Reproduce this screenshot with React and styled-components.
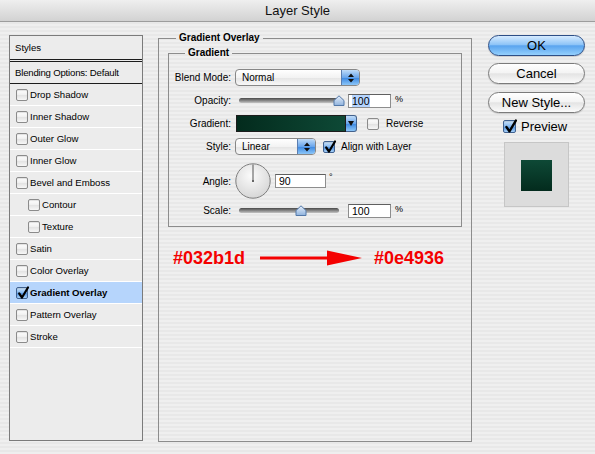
import React from 'react';
import styled, { createGlobalStyle, css } from 'styled-components';

const Global = createGlobalStyle`
  html, body { margin: 0; padding: 0; }
  body { font-family: "Liberation Sans", Arial, sans-serif; color: #000; }
`;

const stripes = css`
  background-color: #ececec;
  background-image: repeating-linear-gradient(
    to bottom,
    #efefef 0px, #efefef 2px,
    #e8e8e8 2px, #e8e8e8 4px
  );
`;

const Window = styled.div`
  width: 595px;
  height: 454px;
  overflow: hidden;
  display: flex;
  flex-direction: column;
  ${stripes}
`;

const TitleBar = styled.div`
  height: 22px;
  flex: none;
  box-sizing: border-box;
  display: flex;
  align-items: center;
  justify-content: center;
  background: linear-gradient(#efefef, #d2d2d2);
  border-bottom: 1px solid #9d9d9d;
  font-size: 13px;
  color: #111;
  padding-bottom: 1px;
`;

const Body = styled.div`
  display: flex;
  align-items: flex-start;
  padding: 13px 0 0 9px;
`;

/* ---------- left style list ---------- */
const StyleList = styled.div`
  width: 134px;
  height: 406px;
  box-sizing: border-box;
  border: 1px solid #7b7b7b;
  background: #ececec;
  display: flex;
  flex-direction: column;
  flex: none;
  font-size: 9.6px;
`;

const ListHeader = styled.div`
  height: 23px;
  display: flex;
  align-items: center;
  padding-left: 5px;
  border-bottom: 3px double #1c1c1c;
`;

const BlendRow = styled.div`
  height: 21px;
  display: flex;
  align-items: center;
  padding-left: 5px;
  border-bottom: 1px solid #1c1c1c;
  letter-spacing: -0.2px;
`;

const ListItem = styled.div`
  height: 21px;
  display: flex;
  align-items: center;
  gap: 2px;
  padding-left: ${p => 6 + (p.$indent ? 12 : 0)}px;
  border-bottom: 1px solid #ffffff;
  background: ${p => (p.$selected ? '#b6d5fc' : 'transparent')};
  font-weight: ${p => (p.$selected ? 700 : 400)};
`;

/* ---------- checkbox ---------- */
const Box = styled.span`
  width: ${p => p.$size}px;
  height: ${p => p.$size}px;
  box-sizing: border-box;
  flex: none;
  border-radius: 2px;
  border: 1px solid ${p => (p.$checked ? '#40618f' : '#8b8b8b')};
  background: ${p =>
    p.$checked
      ? 'linear-gradient(#cfe5fb, #7fb5ef 50%, #4f92e3 51%, #a6d0f8)'
      : 'linear-gradient(#ffffff, #efefef 50%, #e2e2e2 51%, #f7f7f7)'};
  position: relative;
  box-shadow: inset 0 1px 1px rgba(0, 0, 0, 0.12);
`;

const CheckMark = styled.svg`
  position: absolute;
  left: 0px;
  top: -2px;
  overflow: visible;
`;

function Checkbox({ checked, size = 12 }) {
  return (
    <Box $checked={checked} $size={size}>
      {checked && (
        <CheckMark width={size} height={size + 2} viewBox="0 0 12 14">
          <path d="M2.2 7.5 L5 11.5 L11 1.5" fill="none" stroke="#000" strokeWidth="2.2" strokeLinecap="round" strokeLinejoin="round" />
        </CheckMark>
      )}
    </Box>
  );
}

/* ---------- main group ---------- */
const Group = styled.fieldset`
  margin: -3px 0 0 15px;
  width: 314px;
  height: 410px;
  box-sizing: border-box;
  border: 1px solid #8c8c8c;
  padding: 3px 9px 0 9px;
  min-inline-size: 0;
  flex: none;
`;

const Legend = styled.legend`
  font-size: 10px;
  font-weight: 700;
  line-height: 12px;
  padding: 0 3px;
  margin-left: ${p => p.$offset}px;
`;

const SubGroup = styled.fieldset`
  margin: 0;
  box-sizing: border-box;
  border: 1px solid #8c8c8c;
  padding: 10px 0 7px 0;
  min-inline-size: 0;
`;

const Row = styled.div`
  display: flex;
  align-items: center;
  height: ${p => p.$h || 17}px;
  margin-top: ${p => p.$mt || 0}px;
  font-size: 10px;
`;

const Label = styled.span`
  width: 62px;
  flex: none;
  text-align: right;
  margin-right: 4px;
  white-space: nowrap;
`;

const Popup = styled.div`
  width: ${p => p.$w}px;
  height: 17px;
  flex: none;
  box-sizing: border-box;
  display: flex;
  border: 1px solid #878787;
  border-radius: 4px;
  overflow: hidden;
  background: linear-gradient(#ffffff, #f3f3f3 50%, #e4e4e4 51%, #f8f8f8);
`;

const PopupText = styled.span`
  flex: 1;
  padding-left: 6px;
  line-height: 15px;
`;

const Stepper = styled.span`
  width: 17px;
  flex: none;
  border-left: 1px solid #5a7db0;
  background: linear-gradient(#c0dcf8, #6aa6ec 50%, #3a86e0 51%, #8cc6f8);
  display: flex;
  align-items: center;
  justify-content: center;
`;

function PopupButton({ w, value }) {
  return (
    <Popup $w={w}>
      <PopupText>{value}</PopupText>
      <Stepper>
        <svg width="6" height="10" viewBox="0 0 6 10">
          <path d="M0 4 L3 0.5 L6 4 Z M0 6 L3 9.5 L6 6 Z" fill="#111" />
        </svg>
      </Stepper>
    </Popup>
  );
}

const Slider = styled.div`
  position: relative;
  width: 100px;
  height: 17px;
  margin-left: 4px;
  flex: none;
  display: flex;
  align-items: center;
`;

const Track = styled.div`
  width: 100%;
  height: 5px;
  border-radius: 3px;
  background: linear-gradient(#4a4a4a, #8a8a8a 55%, #c4c4c4);
`;

const Thumb = styled.svg`
  position: absolute;
  top: 3px;
  transform: translateX(-50%);
`;

function RangeSlider({ value }) {
  return (
    <Slider>
      <Track />
      <Thumb width="12" height="11" viewBox="0 0 12 11" style={{ left: `${value}%` }}>
        <defs>
          <linearGradient id="thumbg" x1="0" y1="0" x2="0" y2="1">
            <stop offset="0" stopColor="#e7f0fb" />
            <stop offset="1" stopColor="#8fb2dd" />
          </linearGradient>
        </defs>
        <path d="M1 10.5 L1 5.5 L6 0.8 L11 5.5 L11 10.5 Z" fill="url(#thumbg)" stroke="#5378a8" strokeWidth="1" />
      </Thumb>
    </Slider>
  );
}

const NumField = styled.div`
  width: ${p => p.$w}px;
  height: 14px;
  flex: none;
  box-sizing: border-box;
  margin-left: ${p => p.$ml}px;
  border: 1px solid #8d8d8d;
  border-top-color: #5f5f5f;
  background: #fff;
  padding-left: 3px;
  line-height: 12px;
  font-size: 10.5px;
`;

const Selected = styled.span`
  background: #b5d5ff;
`;

const Unit = styled.span`
  align-self: flex-start;
  margin-left: ${p => p.$ml}px;
  margin-top: ${p => p.$mt}px;
  font-size: 9px;
`;

const Swatch = styled.div`
  margin-left: 1px;
  width: 110px;
  height: 17px;
  box-sizing: border-box;
  border: 1px solid #1c1c1c;
  background: linear-gradient(to right, #032b1d, #0e4936);
  flex: none;
`;

const SwatchArrow = styled.div`
  width: 11px;
  height: 17px;
  box-sizing: border-box;
  border: 1px solid #44628c;
  border-left: none;
  border-radius: 0 3px 3px 0;
  background: linear-gradient(#c0dcf8, #6aa6ec 50%, #3a86e0 51%, #8cc6f8);
  display: flex;
  align-items: center;
  justify-content: center;
  flex: none;
`;

const CheckLabel = styled.div`
  display: flex;
  align-items: center;
  margin-left: ${p => p.$ml}px;
  gap: ${p => p.$gap}px;
`;

const Dial = styled.svg`
  flex: none;
`;

const Annotation = styled.div`
  display: flex;
  align-items: center;
  margin-top: 21px;
  padding-left: 5px;
  height: 20px;
  color: #f40000;
  font-size: 18px;
  font-weight: 700;
`;

const Arrow = styled.svg`
  margin: 0 12px 0 15px;
  flex: none;
`;

/* ---------- right column ---------- */
const Side = styled.div`
  margin-left: 16px;
  width: 97px;
  display: flex;
  flex-direction: column;
  flex: none;
`;

const AquaButton = styled.div`
  height: 21px;
  margin-top: ${p => p.$mt}px;
  box-sizing: border-box;
  border-radius: 11px;
  display: flex;
  align-items: center;
  justify-content: center;
  font-size: 13px;
  border: 1px solid ${p => (p.$primary ? '#2d4e86' : '#7b7b7b')};
  background: ${p =>
    p.$primary
      ? 'linear-gradient(#d6ebff, #8ec4f7 45%, #5aa4ef 52%, #93cffc)'
      : 'linear-gradient(#ffffff, #f4f4f4 45%, #e4e4e4 52%, #fbfbfb)'};
  box-shadow: 0 1px 1px rgba(0, 0, 0, 0.15);
`;

const PreviewRow = styled.div`
  margin-top: 7px;
  height: 13px;
  padding-left: 15px;
  display: flex;
  align-items: center;
  gap: 5px;
  font-size: 13px;
`;

const PreviewBox = styled.div`
  margin: 9px 0 0 16px;
  width: 65px;
  height: 65px;
  box-sizing: border-box;
  border: 1px solid #c6c6c6;
  background: #dcdcdc;
  display: flex;
  align-items: center;
  justify-content: center;
  padding-top: 2px;
`;

const PreviewSwatch = styled.div`
  width: 31px;
  height: 31px;
  background: linear-gradient(to top, #032b1d, #0e4936);
`;

const styleItems = [
  { name: 'Drop Shadow' },
  { name: 'Inner Shadow' },
  { name: 'Outer Glow' },
  { name: 'Inner Glow' },
  { name: 'Bevel and Emboss' },
  { name: 'Contour', indent: true },
  { name: 'Texture', indent: true },
  { name: 'Satin' },
  { name: 'Color Overlay' },
  { name: 'Gradient Overlay', checked: true, selected: true },
  { name: 'Pattern Overlay' },
  { name: 'Stroke' },
];

export default function App() {
  return (
    <Window>
      <Global />
      <TitleBar>Layer Style</TitleBar>
      <Body>
        <StyleList>
          <ListHeader>Styles</ListHeader>
          <BlendRow>Blending Options: Default</BlendRow>
          {styleItems.map(it => (
            <ListItem key={it.name} $indent={it.indent} $selected={it.selected}>
              <Checkbox checked={it.checked} />
              <span>{it.name}</span>
            </ListItem>
          ))}
        </StyleList>

        <Group>
          <Legend $offset={8}>Gradient Overlay</Legend>
          <SubGroup>
            <Legend $offset={16}>Gradient</Legend>
            <Row>
              <Label>Blend Mode:</Label>
              <PopupButton w={125} value="Normal" />
            </Row>
            <Row $mt={6}>
              <Label>Opacity:</Label>
              <RangeSlider value={100} />
              <NumField $w={43} $ml={9}><Selected>100</Selected></NumField>
              <Unit $ml={4} $mt={2}>%</Unit>
            </Row>
            <Row $mt={6}>
              <Label>Gradient:</Label>
              <Swatch />
              <SwatchArrow>
                <svg width="6" height="5" viewBox="0 0 6 5"><path d="M0 0 L6 0 L3 5 Z" fill="#111" /></svg>
              </SwatchArrow>
              <CheckLabel $ml={10} $gap={7}>
                <Checkbox />
                <span>Reverse</span>
              </CheckLabel>
            </Row>
            <Row $mt={6}>
              <Label>Style:</Label>
              <PopupButton w={81} value="Linear" />
              <CheckLabel $ml={7} $gap={6}>
                <Checkbox checked />
                <span>Align with Layer</span>
              </CheckLabel>
            </Row>
            <Row $mt={7} $h={38}>
              <Label>Angle:</Label>
              <Dial width="36" height="36" viewBox="0 0 36 36">
                <defs>
                  <radialGradient id="dialg" cx="0.45" cy="0.35" r="0.7">
                    <stop offset="0" stopColor="#fbfbfb" />
                    <stop offset="1" stopColor="#d4d4d4" />
                  </radialGradient>
                </defs>
                <circle cx="18" cy="18" r="17.2" fill="url(#dialg)" stroke="#7e7e7e" strokeWidth="1" />
                <line x1="18" y1="18" x2="18" y2="1.5" stroke="#555" strokeWidth="1" />
                <rect x="17" y="17" width="2" height="2" fill="#666" />
              </Dial>
              <NumField $w={51} $ml={4}>90</NumField>
              <Unit $ml={3} $mt={10}>°</Unit>
            </Row>
            <Row $mt={2}>
              <Label>Scale:</Label>
              <RangeSlider value={62} />
              <NumField $w={43} $ml={9}>100</NumField>
              <Unit $ml={4} $mt={2}>%</Unit>
            </Row>
          </SubGroup>
          <Annotation>
            <span>#032b1d</span>
            <Arrow width="102" height="16" viewBox="0 0 102 16">
              <line x1="0" y1="8" x2="70" y2="8" stroke="#f40000" strokeWidth="3" />
              <path d="M67 0.5 L102 8 L67 15.5 Z" fill="#f40000" />
            </Arrow>
            <span>#0e4936</span>
          </Annotation>
        </Group>

        <Side>
          <AquaButton $primary $mt={0}>OK</AquaButton>
          <AquaButton $mt={7}>Cancel</AquaButton>
          <AquaButton $mt={8}>New Style...</AquaButton>
          <PreviewRow>
            <Checkbox checked size={13} />
            <span>Preview</span>
          </PreviewRow>
          <PreviewBox>
            <PreviewSwatch />
          </PreviewBox>
        </Side>
      </Body>
    </Window>
  );
}
